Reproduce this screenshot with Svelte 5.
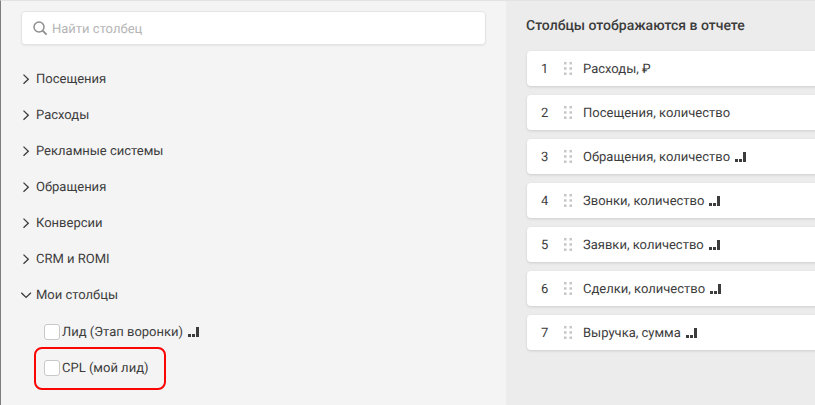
<script>
  const groups = ['Посещения', 'Расходы', 'Рекламные системы', 'Обращения', 'Конверсии', 'CRM и ROMI'];
  const custom = [
    { label: 'Лид (Этап воронки)', signal: true, marked: false },
    { label: 'CPL (мой лид)', signal: false, marked: true }
  ];
  const columns = [
    { label: 'Расходы, ₽', signal: false },
    { label: 'Посещения, количество', signal: false },
    { label: 'Обращения, количество', signal: true },
    { label: 'Звонки, количество', signal: true },
    { label: 'Заявки, количество', signal: true },
    { label: 'Сделки, количество', signal: true },
    { label: 'Выручка, сумма', signal: true }
  ];
</script>

{#snippet bars()}
  <svg class="bars" width="11" height="10" viewBox="0 0 11 10" shape-rendering="crispEdges">
    <path fill="#3c3c3c" d="M0 7h3v3H0zM4 7h3v3H4zM8 0h3v10H8z" />
  </svg>
{/snippet}

<div class="app">
  <section class="left">
    <label class="search">
      <svg width="15" height="15" viewBox="0 0 15 15" fill="none" stroke="#8e8e8e" stroke-width="1.5">
        <circle cx="6" cy="6" r="5" />
        <path d="M9.6 9.6l4 4" stroke-width="1.8" />
      </svg>
      <input type="text" placeholder="Найти столбец" />
    </label>
    <div class="tree">
      {#each groups as g}
        <div class="group">
          <svg width="12" height="12" viewBox="0 0 12 12" fill="none" stroke="#3c3c3c" stroke-width="1.3"><path d="M2.5 1.6L7.3 6.2L2.5 10.8" /></svg>
          <span>{g}</span>
        </div>
      {/each}
      <div class="group">
        <svg width="12" height="12" viewBox="0 0 12 12" fill="none" stroke="#3c3c3c" stroke-width="1.3"><path d="M.3 3.8L5.1 8.4L9.9 3.8" /></svg>
        <span>Мои столбцы</span>
      </div>
      {#each custom as c}
        <div class="item" class:marked={c.marked}>
          <i class="box"></i><span>{c.label}</span>{#if c.signal}{@render bars()}{/if}
        </div>
      {/each}
    </div>
  </section>
  <section class="right">
    <h2>Столбцы отображаются в отчете</h2>
    <div class="cards">
      {#each columns as c, i}
        <div class="card">
          <span class="num">{i + 1}</span>
          <svg class="grip" width="8" height="13" viewBox="0 0 8 13" fill="#c6c6c6">
            <path d="M0 0h2.5v2.5H0zM5.500 0H8v2.500H5.500zM0 5.250h2.500v2.500H0zM5.500 5.250H8v2.500H5.500zM0 10.500h2.500V13H0zM5.500 10.500H8V13H5.500z" />
          </svg>
          <span>{c.label}</span>{#if c.signal}{@render bars()}{/if}
        </div>
      {/each}
    </div>
  </section>
</div>

<style>
  .app {
    box-sizing: border-box;
    display: flex;
    width: 815px;
    height: 405px;
    overflow: hidden;
    border-top: 1px solid #e3e3e3;
    border-left: 1px solid #7e7c7d;
    background: #f4f4f4;
    color: #3c3c3c;
    font: 13px/18px Roboto, sans-serif;
    text-rendering: geometricPrecision;
  }
  .app span { white-space: nowrap; padding-top: 2px; }
  .left { width: 505px; flex: none; box-sizing: border-box; padding: 10px 20px 0; }
  .search {
    display: flex;
    align-items: center;
    gap: 4px;
    box-sizing: border-box;
    width: 465px;
    height: 34px;
    padding-left: 11px;
    border: 1px solid #e4e4e4;
    border-radius: 4px;
    background: #fff;
    box-shadow: 0 1px 2px rgba(0, 0, 0, 0.06);
  }
  input {
    flex: 1;
    padding: 3px 0 0;
    border: 0;
    outline: 0;
    background: none;
    font: inherit;
    text-rendering: inherit;
  }
  input::placeholder { color: #b5b5b5; opacity: 1; }
  .tree { padding-top: 16px; }
  .group { display: flex; align-items: center; height: 36px; gap: 3px; }
  .item {
    box-sizing: border-box;
    display: flex;
    align-items: center;
    width: max-content;
    height: 36px;
    padding-left: 23px;
    margin-top: 1px;
  }
  .item.marked {
    height: 43px;
    margin: -3px 0 0 13px;
    width: 132px;
    padding: 0 0 1px 8px;
    border: 2px solid #fb0505;
    border-radius: 8px;
  }
  .box {
    box-sizing: border-box;
    width: 16px;
    height: 16px;
    margin-right: 2px;
    border: 1px solid #c9c9c9;
    border-radius: 3px;
    background: #fff;
  }
  .bars { margin-left: 5px; }
  .right { flex: 1; min-width: 0; padding: 16px 0 0 21px; background: #ececec; }
  h2 { margin: 0 0 0 -1px; font-size: 14px; line-height: 18px; font-weight: 500; white-space: nowrap; }
  .cards { display: flex; flex-direction: column; gap: 9px; padding-top: 16px; }
  .card {
    box-sizing: border-box;
    display: flex;
    align-items: center;
    width: 320px;
    height: 35px;
    padding-left: 14px;
    border-radius: 4px;
    background: #fff;
    box-shadow: 0 1px 3px rgba(0, 0, 0, 0.13);
  }
  .num { width: 23px; }
  .grip { margin-right: 11px; }
</style>
